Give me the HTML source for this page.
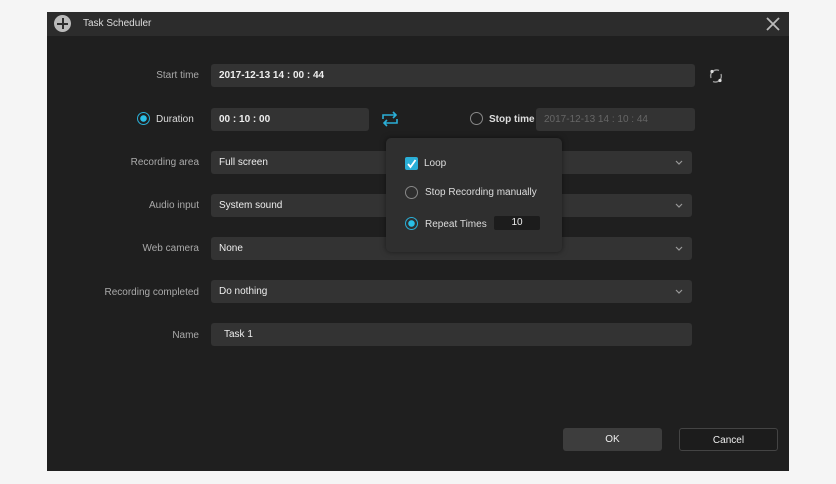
<!DOCTYPE html>
<html><head><meta charset="utf-8"><style>
*{margin:0;padding:0;box-sizing:border-box}
body{width:836px;height:484px;background:#f5f5f5;font-family:"Liberation Sans",sans-serif;position:relative;overflow:hidden}
.dlg{position:absolute;left:47px;top:12px;width:742px;height:459px;background:#1f1f1f}
.tb{position:absolute;left:0;top:0;width:742px;height:24px;background:#2c2c2c}
.a{position:absolute}
.lbl{position:absolute;color:#aaa;font-size:10px;text-align:right;width:160px}
.fld{position:absolute;background:#333;border-radius:3px;height:23px;color:#eee;font-size:10px;line-height:23px;padding-left:8px}
.chev{position:absolute;right:9px;top:9px}
.rad{position:absolute;width:13px;height:13px;border-radius:50%;border:1.5px solid #888}
.rad.on{border-color:#2aaed6;background:radial-gradient(circle,#2ac0e8 0 3px,#1f1f1f 3.5px)}
.btn{position:absolute;height:23px;border-radius:3px;color:#eee;font-size:10px;text-align:center;line-height:23px;width:99px}
</style></head><body>
<div class="dlg">
 <div class="tb">
  <div class="a" style="left:7px;top:3px;width:17px;height:17px;border-radius:50%;background:#bbb"></div>
  <div class="a" style="left:10px;top:10.5px;width:11px;height:2px;background:#2c2c2c"></div>
  <div class="a" style="left:14.5px;top:6px;width:2px;height:11px;background:#2c2c2c"></div>
  <div class="a" style="left:36px;top:6px;color:#ddd;font-size:10px">Task Scheduler</div>
  <svg class="a" style="left:719px;top:5px" width="14" height="14"><path d="M1 1L13 13M13 1L1 13" stroke="#bbb" stroke-width="1.8"/></svg>
 </div>
 <div class="lbl" style="left:0;top:58px;width:152px">Start time</div>
 <div class="fld" style="left:164px;top:52px;width:484px;font-weight:bold">2017-12-13 14 : 00 : 44</div>
 <svg class="a" style="left:661px;top:56px" width="16" height="16"><path d="M3 10A6 6 0 0 1 11 2.5M13 6A6 6 0 0 1 5 13.5" stroke="#999" stroke-width="1.4" fill="none"/><circle cx="4" cy="3.5" r="1.6" fill="#ddd"/><circle cx="12" cy="12.5" r="1.6" fill="#ddd"/></svg>

 <div class="rad on" style="left:90px;top:100px"></div>
 <div class="a" style="left:109px;top:102px;color:#ddd;font-size:10px">Duration</div>
 <div class="fld" style="left:164px;top:96px;width:158px;font-weight:bold">00 : 10 : 00</div>
 <svg class="a" style="left:333px;top:99px" width="20" height="16"><path d="M3 8V4H16M13 1L16 4L13 7M17 8V12H4M7 15L4 12L7 9" stroke="#2aaed6" stroke-width="1.6" fill="none"/></svg>
 <div class="rad" style="left:423px;top:100px"></div>
 <div class="a" style="left:442px;top:102px;color:#ddd;font-size:10px;font-weight:bold">Stop time</div>
 <div class="fld" style="left:489px;top:96px;width:159px;color:#666;font-size:10px">2017-12-13 14 : 10 : 44</div>

 <div class="lbl" style="left:0;top:145px;width:152px">Recording area</div>
 <div class="fld" style="left:164px;top:139px;width:481px">Full screen<svg class="chev" width="8" height="5"><path d="M1 1L4 4L7 1" stroke="#999" stroke-width="1.2" fill="none"/></svg></div>
 <div class="lbl" style="left:0;top:188px;width:152px">Audio input</div>
 <div class="fld" style="left:164px;top:182px;width:481px">System sound<svg class="chev" width="8" height="5"><path d="M1 1L4 4L7 1" stroke="#999" stroke-width="1.2" fill="none"/></svg></div>
 <div class="lbl" style="left:0;top:231px;width:152px">Web camera</div>
 <div class="fld" style="left:164px;top:225px;width:481px">None<svg class="chev" width="8" height="5"><path d="M1 1L4 4L7 1" stroke="#999" stroke-width="1.2" fill="none"/></svg></div>
 <div class="lbl" style="left:0;top:275px;width:152px">Recording completed</div>
 <div class="fld" style="left:164px;top:268px;width:481px">Do nothing<svg class="chev" width="8" height="5"><path d="M1 1L4 4L7 1" stroke="#999" stroke-width="1.2" fill="none"/></svg></div>
 <div class="lbl" style="left:0;top:318px;width:152px">Name</div>
 <div class="fld" style="left:164px;top:311px;width:481px;padding-left:13px">Task 1</div>

 <div class="a" style="left:339px;top:126px;width:176px;height:114px;background:#2f2f2f;border-radius:5px;box-shadow:0 0 6px rgba(0,0,0,.5)">
  <div class="a" style="left:19px;top:19px;width:13px;height:13px;background:#2aaed6;border-radius:2px"></div>
  <svg class="a" style="left:20px;top:20px" width="11" height="11"><path d="M2 6L4.5 9L9.5 2" stroke="#fff" stroke-width="1.8" fill="none"/></svg>
  <div class="a" style="left:38px;top:20px;color:#ddd;font-size:10px">Loop</div>
  <div class="rad" style="left:19px;top:48px"></div>
  <div class="a" style="left:39px;top:49px;color:#ddd;font-size:10px">Stop Recording manually</div>
  <div class="rad on" style="left:19px;top:79px;background:radial-gradient(circle,#2ac0e8 0 3px,#2f2f2f 3.5px)"></div>
  <div class="a" style="left:39px;top:81px;color:#ddd;font-size:10px">Repeat Times</div>
  <div class="a" style="left:108px;top:78px;width:46px;height:14px;background:#1c1c1c;border-radius:2px;color:#eee;font-size:10px;text-align:center;line-height:14px">10</div>
 </div>

 <div class="btn" style="left:516px;top:416px;background:#3d3d3d">OK</div>
 <div class="btn" style="left:632px;top:416px;border:1px solid #444;background:#1c1c1c">Cancel</div>
</div>
</body></html>
